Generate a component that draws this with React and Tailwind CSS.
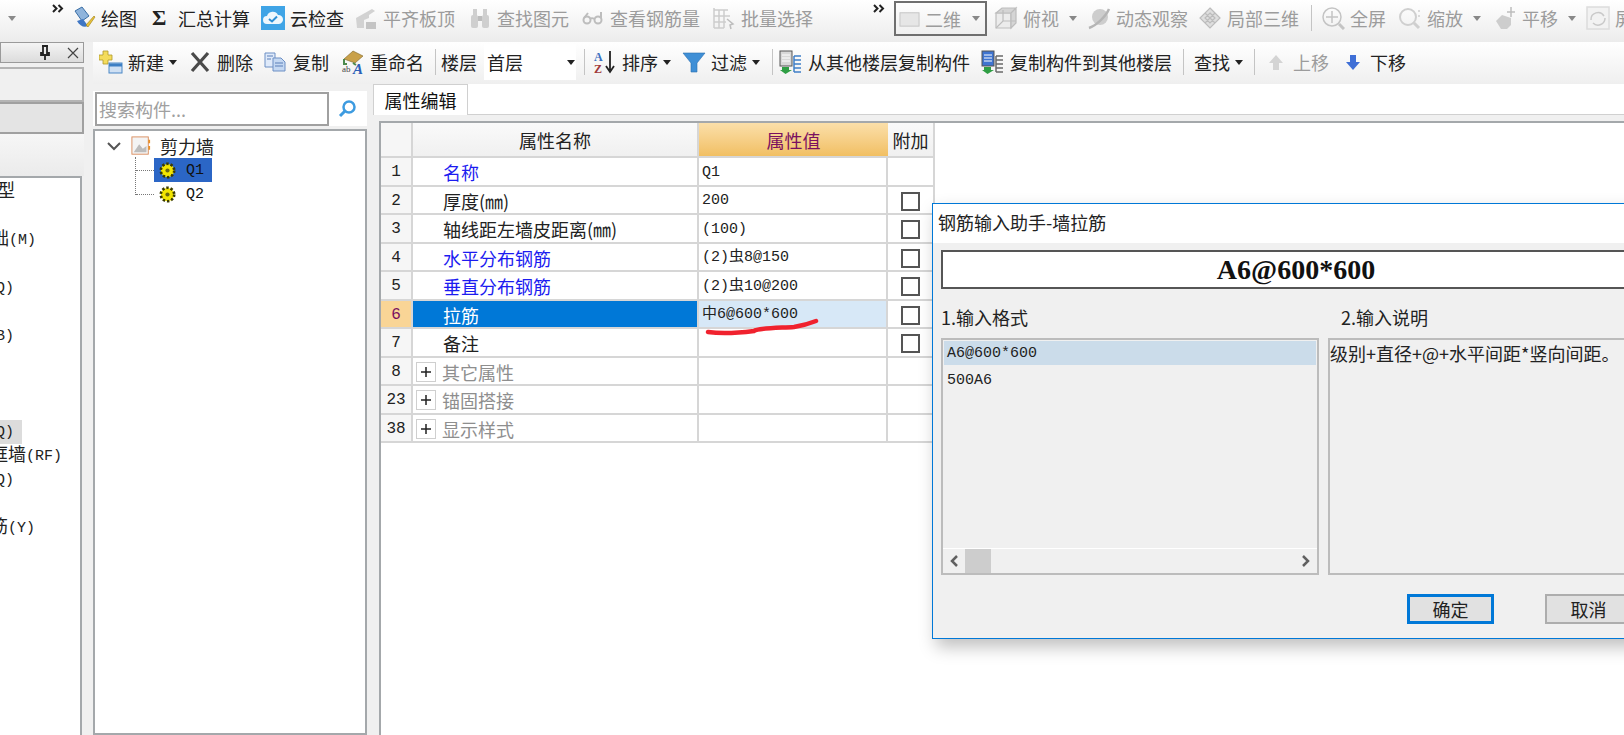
const CJK = "font-['Noto_Sans_CJK_SC','Liberation_Sans',sans-serif]";
const MONO = "font-['Liberation_Mono','Noto_Sans_CJK_SC',monospace]";

const Caret = ({ className = "" }) => (
  <svg viewBox="0 0 8 5" className={`w-2 h-[5px] shrink-0 ${className}`}>
    <path d="M0 0h8L4 5z" fill="currentColor" />
  </svg>
);

const More = ({ className = "" }) => (
  <svg viewBox="0 0 12 9" className={`w-3 h-[9px] shrink-0 ${className}`} fill="none" stroke="#222" strokeWidth="2">
    <path d="M1 1l3.500 3.500L1 8M6.500 1L10 4.500 6.500 8" />
  </svg>
);

const Sep = ({ className = "" }) => <div className={`w-px h-[26px] bg-[#c4c4c4] shrink-0 ${className}`} />;

/* top toolbar icons */
const PaintIcon = () => (
  <svg viewBox="0 0 24 24" className="w-6 h-6">
    <path d="M3 5l7-4 7 9-7 5z" fill="#8fb4dc" stroke="#3a6ea5" strokeWidth="1" />
    <path d="M5 15c3 5 7 7 11 5l-5-7z" fill="#3f76c4" />
    <path d="M14 19l8-9 1 1-7 10z" fill="#e9c33a" stroke="#9a7a12" strokeWidth=".6" />
  </svg>
);
const CloudIcon = () => (
  <svg viewBox="0 0 24 24" className="w-6 h-6">
    <rect x="0" y="0" width="24" height="24" fill="#3fa4e6" />
    <path d="M6 18a4 4 0 0 1 0-8 6 6 0 0 1 11-1 4.500 4.500 0 0 1 1 9z" fill="#eef7fd" />
    <path d="M8 13l3 2.500 5-5" fill="none" stroke="#2d8fd4" strokeWidth="2" />
  </svg>
);
const SlabIcon = () => (
  <svg viewBox="0 0 24 24" className="w-6 h-6">
    <path d="M2 12L18 3l3 2-6 4v3l-5 2v8H3z" fill="#d2d2d2" />
    <path d="M12 16h10v7H12z" fill="#c4c4c4" />
  </svg>
);
const BinocularIcon = () => (
  <svg viewBox="0 0 24 24" className="w-6 h-6" fill="#cfcfcf">
    <rect x="3" y="9" width="7" height="13" rx="2" />
    <rect x="14" y="9" width="7" height="13" rx="2" />
    <rect x="5" y="3" width="4" height="7" />
    <rect x="15" y="3" width="4" height="7" />
    <rect x="10" y="10" width="4" height="5" fill="#bdbdbd" />
  </svg>
);
const GlassesIcon = () => (
  <svg viewBox="0 0 24 24" className="w-6 h-6" fill="none" stroke="#bdbdbd" strokeWidth="2">
    <circle cx="6" cy="14" r="3.500" />
    <circle cx="17" cy="14" r="3.500" />
    <path d="M9 13c1-1 3-1 4 0M3 12l4-5M20 12V6" />
  </svg>
);
const BatchIcon = () => (
  <svg viewBox="0 0 24 24" className="w-6 h-6" fill="none" stroke="#cdcdcd" strokeWidth="1.500">
    <path d="M2 2v20M2 4h14M2 10h16M2 16h12M2 22h10M7 4v18M12 4v18" />
    <path d="M15 13l6 5-3 1 1 4" stroke="#bdbdbd" />
  </svg>
);
const PlaneIcon = () => (
  <svg viewBox="0 0 22 22" className="w-[21px] h-[21px]">
    <rect x="1" y="5" width="20" height="14" fill="#e6e6e6" stroke="#c4c4c4" />
  </svg>
);
const CubeIcon = () => (
  <svg viewBox="0 0 24 24" className="w-6 h-6" fill="#ececec" stroke="#bdbdbd" strokeWidth="1.200">
    <path d="M2 7v15h15V7z" />
    <path d="M2 7l6-5h14l-5 5zM17 7l5-5v15l-5 5z" fill="#d5d5d5" />
    <path d="M2 22l7-7h13M9 15V4" fill="none" />
  </svg>
);
const OrbitIcon = () => (
  <svg viewBox="0 0 24 24" className="w-6 h-6">
    <circle cx="13" cy="11" r="8" fill="#cdcdcd" />
    <path d="M2 22C8 20 18 12 22 3" stroke="#b5b5b5" strokeWidth="2.500" fill="none" />
  </svg>
);
const LocalIcon = () => (
  <svg viewBox="0 0 24 24" className="w-6 h-6" fill="#dedede" stroke="#bcbcbc" strokeWidth="1.200">
    <path d="M12 2l10 10-10 10L2 12z" />
    <path d="M7 7l10 10M17 7L7 17M12 7l5 5-5 5-5-5z" fill="none" />
  </svg>
);
const FullIcon = () => (
  <svg viewBox="0 0 24 24" className="w-6 h-6" fill="none" stroke="#c4c4c4" strokeWidth="1.500">
    <circle cx="11" cy="11" r="9" />
    <path d="M11 5v12M5 11h12" />
    <path d="M18 18l5 5" strokeWidth="3" />
  </svg>
);
const ZoomIcon = () => (
  <svg viewBox="0 0 24 24" className="w-6 h-6" fill="none" stroke="#cfcfcf" strokeWidth="2">
    <circle cx="10" cy="11" r="8" />
    <path d="M16 17l5 5" strokeWidth="3" />
    <path d="M21 4v2M21 9v2" strokeWidth="1.500" />
  </svg>
);
const PanIcon = () => (
  <svg viewBox="0 0 24 24" className="w-6 h-6">
    <path d="M3 15l6-6 9 3v7l-4 4H8z" fill="#cdcdcd" />
    <path d="M18 1v10M14 6h8" stroke="#bdbdbd" strokeWidth="1.500" />
  </svg>
);
const RotateIcon = () => (
  <svg viewBox="0 0 24 24" className="w-6 h-6" fill="none" stroke="#c9c9c9" strokeWidth="1.500">
    <rect x="1" y="1" width="22" height="22" fill="#f2f2f2" stroke="#dcdcdc" />
    <path d="M5 14a7 7 0 0 1 13-4M19 12a7 7 0 0 1-12 5" />
  </svg>
);

/* second toolbar icons */
const NewIcon = () => (
  <svg viewBox="0 0 24 24" className="w-6 h-6">
    <path d="M4 1h5v4h4v5H9v4H4v-4H0V5h4z" fill="#f4dc5c" stroke="#b09a2c" strokeWidth=".8" />
    <rect x="10" y="13" width="13" height="10" fill="#cfe0f3" stroke="#4b87c6" />
    <path d="M10 15h13" stroke="#3d7fc4" strokeWidth="3" />
  </svg>
);
const DeleteIcon = () => (
  <svg viewBox="0 0 24 24" className="w-6 h-6">
    <path d="M4 3l16 18M20 3L4 21" stroke="#4a4a4a" strokeWidth="3.200" />
  </svg>
);
const CopyIcon = () => (
  <svg viewBox="0 0 24 24" className="w-6 h-6" fill="#dfeafa" stroke="#6d8fc4">
    <path d="M1 3h10v14H1z" />
    <path d="M9 8h8l4 4v9H9z" fill="#c4d8f2" />
    <path d="M3 6h6M3 9h4M11 13h8M11 16h8" stroke="#5a7fb8" />
  </svg>
);
const RenameIcon = () => (
  <svg viewBox="0 0 24 24" className="w-6 h-6">
    <path d="M3 9l9-8 10 5-8 7z" fill="#c9a14a" stroke="#7d6426" strokeWidth=".6" />
    <path d="M3 9v5h3M12 13l3 2" stroke="#4d8a4d" strokeWidth="2" fill="none" />
    <text x="1" y="22" fontSize="9" fontFamily="Liberation Serif" fill="#444">ab</text>
    <text x="12" y="24" fontSize="15" fontWeight="700" fontStyle="italic" fontFamily="Liberation Serif" fill="#2c5fb8">A</text>
  </svg>
);
const SortIcon = () => (
  <svg viewBox="0 0 24 24" className="w-6 h-6">
    <text x="1" y="11" fontSize="12" fontWeight="700" fontFamily="Liberation Serif" fill="#3a6fc0">A</text>
    <text x="1" y="23" fontSize="12" fontWeight="700" fontFamily="Liberation Serif" fill="#a13a3a">Z</text>
    <path d="M17 1v19M13 16l4 6 4-6" stroke="#222" strokeWidth="1.800" fill="none" />
  </svg>
);
const FilterIcon = () => (
  <svg viewBox="0 0 24 24" className="w-6 h-6">
    <path d="M1 3h22l-8 10v9h-6v-9z" fill="#3f8fd6" stroke="#2a6fb0" strokeWidth=".6" />
  </svg>
);
const FloorCopyIcon = ({ blue }) => (
  <svg viewBox="0 0 24 24" className="w-6 h-6">
    <rect x="1" y="1" width="12" height="15" fill={blue ? "#3f74d0" : "#d8d8d8"} stroke="#555" />
    <path d="M3 5h8M3 8h8M3 11h8" stroke="#fff" />
    <path d="M3 17h7v3h3l-6.500 4L1 20h2z" fill="#2f9e44" />
    <path d="M15 6h7M15 10h7M15 14h7M15 18h7M15 22h7M15 6v16" stroke={blue ? "#6a6a6a" : "#3f7fc8"} strokeWidth="1.500" fill="none" />
  </svg>
);
const UpIcon = () => (
  <svg viewBox="0 0 24 24" className="w-6 h-6">
    <path d="M12 5l7 8h-4v7H9v-7H5z" fill="#d4d4d4" />
  </svg>
);
const DownIcon = () => (
  <svg viewBox="0 0 24 24" className="w-6 h-6">
    <path d="M12 20l7-8h-4V5H9v7H5z" fill="#3f6fd6" />
  </svg>
);

const Gear = () => (
  <svg viewBox="0 0 18 18" className="w-[17px] h-[17px] shrink-0">
    <circle cx="9" cy="9" r="7" fill="#f2e500" stroke="#3a3a00" strokeWidth="3" strokeDasharray="2.500 2" />
    <circle cx="9" cy="9" r="5.500" fill="#f2e500" />
    <circle cx="9" cy="9" r="2.200" fill="#6b6a10" />
  </svg>
);

const Tool = ({ icon, label, disabled, caret, className = "" }) => (
  <div className={`flex items-center shrink-0 whitespace-nowrap ${disabled ? "text-[#9c9c9c]" : "text-[#222]"} ${className}`}>
    <span className="w-6 h-6 mr-[5px] flex items-center justify-center">{icon}</span>
    <span>{label}</span>
    {caret && <Caret className={`ml-[5px] ${disabled ? "text-[#888] !ml-[10px]" : "text-[#222]"}`} />}
  </div>
);

const rows = [
  { n: "1", name: "名称", value: "Q1", blue: true },
  { n: "2", name: "厚度(㎜)", value: "200", check: true },
  { n: "3", name: "轴线距左墙皮距离(㎜)", value: "(100)", check: true },
  { n: "4", name: "水平分布钢筋", value: "(2)虫8@150", blue: true, check: true },
  { n: "5", name: "垂直分布钢筋", value: "(2)虫10@200", blue: true, check: true },
  { n: "6", name: "拉筋", value: "中6@600*600", check: true, selected: true },
  { n: "7", name: "备注", value: "", check: true },
  { n: "8", name: "其它属性", value: "", group: true },
  { n: "23", name: "锚固搭接", value: "", group: true },
  { n: "38", name: "显示样式", value: "", group: true },
];

// the list is cut off by the window edge, so each row gets its own left offset
const leftItems = [
  { cjk: "型", offset: "-ml-[3px]" },
  {},
  { cjk: "础", text: "(M)", offset: "-ml-[9px]" },
  {},
  { text: "Q)", offset: "-ml-[4px]" },
  {},
  { text: "B)", offset: "-ml-[4px]" },
  {},
  {},
  {},
  { text: "Q)", offset: "-ml-[4px]", active: true },
  { cjk: "框墙", text: "(RF)", offset: "-ml-[10px]" },
  { text: "Q)", offset: "-ml-[4px]" },
  {},
  { cjk: "筋", text: "(Y)", offset: "-ml-[10px]" },
];

function PropRow({ row }) {
  return (
    <div className="flex h-[28.5px]">
      <div className={`w-8 shrink-0 flex items-center justify-center pt-[2px] border-r-2 border-b-2 border-[#d6d6d6] text-[16px] ${MONO} ${row.selected ? "bg-[#f9d596] text-[#7a1060]" : "bg-[#f6f6f6] text-[#222]"}`}>
        {row.n}
      </div>
      <div className={`w-[286px] shrink-0 flex items-center pt-[2px] border-r-2 border-b-2 border-[#d6d6d6] ${row.selected ? "bg-[#0078d7] text-white" : row.blue ? "text-[#1c1cf0]" : row.group ? "text-[#8e8e8e]" : "text-[#222]"} ${row.group ? "pl-[3px]" : "pl-[30px]"}`}>
        {row.group && (
          <span className="w-[20px] h-[20px] mr-[6px] border border-[#cfcfcf] bg-white flex items-center justify-center">
            <svg viewBox="0 0 12 12" className="w-3 h-3"><path d="M6 1v10M1 6h10" stroke="#222" strokeWidth="1.500" /></svg>
          </span>
        )}
        {row.name}
      </div>
      <div className={`relative w-[189px] shrink-0 flex items-center pl-[3px] pt-[2px] border-r-2 border-b-2 border-[#d6d6d6] text-[15px] text-[#222] ${MONO} ${row.selected ? "bg-[#d7e8f7]" : ""}`}>
        {row.value}
        {row.selected && (
          <svg viewBox="0 0 116 16" className="absolute left-[6px] top-[18px] w-[116px] h-4 overflow-visible">
            <path d="M3 13c14 2 30 1 46-1 4-3 24-3 40-4 6-1 12-2 22-6" fill="none" stroke="#f0222e" strokeWidth="4.500" strokeLinecap="round" />
          </svg>
        )}
      </div>
      <div className="w-[47px] shrink-0 flex items-center justify-center pt-[3px] border-r-2 border-b-2 border-[#d6d6d6]">
        {row.check && <span className="w-[19px] h-[19px] border-2 border-[#555] bg-white" />}
      </div>
    </div>
  );
}

function Dialog() {
  return (
    <div className={`absolute left-[932px] top-[203px] w-[740px] h-[436px] flex flex-col bg-[#f0f0f0] border border-[#0078d7] shadow-[4px_8px_16px_rgba(0,0,0,0.25)] ${CJK}`}>
      <div className="h-[39px] shrink-0 bg-white pl-[5px] pb-1 flex items-center text-[#222]">钢筋输入助手-墙拉筋</div>
      <div className="mt-[7px] ml-2 w-[710px] h-[39px] shrink-0 border-2 border-[#555] bg-white flex items-center justify-center font-['Liberation_Serif',serif] font-bold text-[28px] text-[#111]">
        A6@600*600
      </div>
      <div className="mt-[15px] flex h-[26px] shrink-0 items-center text-[#222]">
        <span className="ml-2 w-[400px]">1.输入格式</span>
        <span>2.输入说明</span>
      </div>
      <div className="mt-2 ml-2 flex gap-[9px] shrink-0">
        <div className="w-[378px] h-[237px] shrink-0 flex flex-col border-2 border-[#bcbcbc]">
          <div className={`flex-1 pt-[1px] px-[1px] text-[15px] text-[#222] ${MONO}`}>
            <div className="h-[24px] pl-[3px] flex items-center bg-[#cbdcea]">A6@600*600</div>
            <div className="h-[26px] mt-[2px] pl-[3px] flex items-center">500A6</div>
          </div>
          <div className="h-[25px] shrink-0 flex items-center px-[6px] border-t border-white">
            <svg viewBox="0 0 10 14" className="w-[10px] h-[14px]"><path d="M8 2L3 7l5 5" fill="none" stroke="#606060" strokeWidth="2.500" /></svg>
            <div className="ml-[6px] w-[26px] h-[24px] bg-[#cdcdcd]" />
            <div className="flex-1" />
            <svg viewBox="0 0 10 14" className="w-[10px] h-[14px]"><path d="M2 2l5 5-5 5" fill="none" stroke="#606060" strokeWidth="2.500" /></svg>
          </div>
        </div>
        <div className="w-[400px] h-[237px] shrink-0 border-2 border-[#bcbcbc] pt-1 text-[#222] whitespace-nowrap">
          级别+直径+@+水平间距*竖向间距。
        </div>
      </div>
      <div className="mt-[19px] flex shrink-0">
        <button className="ml-[474px] w-[87px] h-[30px] shrink-0 border-[3px] border-[#0078d7] bg-[#e1e1e1] flex items-center justify-center text-[#222]">确定</button>
        <button className="ml-[51px] w-[87px] h-[30px] shrink-0 border-2 border-[#adadad] bg-[#e1e1e1] flex items-center justify-center text-[#222]">取消</button>
      </div>
    </div>
  );
}

export default function App() {
  return (
    <div className={`relative w-[1624px] h-[735px] overflow-hidden bg-[#f0f0f0] text-[18px] leading-none ${CJK}`}>
      {/* main toolbar */}
      <div className="h-[42px] pb-[6px] flex items-center overflow-hidden bg-gradient-to-b from-white to-[#ececec]">
        <Caret className="ml-2 text-[#8a8a8a]" />
        <More className="ml-9 -mt-5 shrink-0" />
        <Tool className="ml-2" icon={<PaintIcon />} label="绘图" />
        <div className="ml-[15px] flex items-center shrink-0 text-[#222]">
          <span className="font-['Liberation_Serif',serif] font-bold text-[22px] w-[26px]">Σ</span>
          <span>汇总计算</span>
        </div>
        <Tool className="ml-[11px]" icon={<CloudIcon />} label="云检查" />
        <Tool className="ml-[10px]" icon={<SlabIcon />} label="平齐板顶" disabled />
        <Tool className="ml-[13px]" icon={<BinocularIcon />} label="查找图元" disabled />
        <Tool className="ml-3" icon={<GlassesIcon />} label="查看钢筋量" disabled />
        <Tool className="ml-3" icon={<BatchIcon />} label="批量选择" disabled />
        <More className="ml-[60px] -mt-5" />
        <div className="ml-[9px] w-[93px] h-[35px] mt-[1px] shrink-0 border-2 border-[#6f6f6f] flex items-center pl-[3px] text-[#9c9c9c]">
          <PlaneIcon />
          <span className="ml-[5px]">二维</span>
          <Caret className="ml-[11px] text-[#888]" />
        </div>
        <Tool className="ml-[7px]" icon={<CubeIcon />} label="俯视" disabled caret />
        <Tool className="ml-[10px]" icon={<OrbitIcon />} label="动态观察" disabled />
        <Tool className="ml-[10px]" icon={<LocalIcon />} label="局部三维" disabled />
        <Sep className="ml-3" />
        <Tool className="ml-[9px]" icon={<FullIcon />} label="全屏" disabled />
        <Tool className="ml-3" icon={<ZoomIcon />} label="缩放" disabled caret />
        <Tool className="ml-3" icon={<PanIcon />} label="平移" disabled caret />
        <Tool className="ml-[10px]" icon={<RotateIcon />} label="屏幕旋转" disabled />
      </div>

      <div className="flex h-[693px]">
        {/* left navigation panel, cut off by the window edge */}
        <div className="w-[84px] shrink-0 flex flex-col">
          <div className="h-[21px] shrink-0 flex items-center border border-[#9a9a9a] bg-gradient-to-b from-[#f4f4f4] to-[#dcdcdc]">
            <svg viewBox="0 0 12 16" className="ml-[38px] w-3 h-4"><path d="M3 1h6M4 1v7H2v2h8V8H8V1M6 10v5" fill="none" stroke="#222" strokeWidth="1.800" /></svg>
            <svg viewBox="0 0 12 12" className="ml-[16px] w-3 h-3"><path d="M1 1l10 10M11 1L1 11" stroke="#444" strokeWidth="1.200" /></svg>
          </div>
          <div className="mt-1 h-[35px] shrink-0 border-2 border-l-0 border-[#b4b4b4] bg-[#f0f0f0]" />
          <div className="h-[32px] shrink-0 border-2 border-l-0 border-[#a0a0a0] bg-[#e4e4e4]" />
          <div className="h-[42px] shrink-0 bg-gradient-to-b from-[#f6f6f6] to-[#ebebeb]" />
          <div className={`flex-1 w-[82px] pt-[2px] border-r-2 border-t-2 border-[#a4a8ab] bg-white text-[15px] text-[#222] overflow-hidden ${MONO}`}>
            {leftItems.map((item, i) => (
              <div key={i} className="h-6 flex items-center overflow-hidden">
                {(item.cjk || item.text) && (
                  <span className={`h-6 flex items-center whitespace-nowrap ${item.offset} ${item.active ? "w-[26px] bg-[#dcdcdc]" : ""}`}>
                    {item.cjk && <span className="text-[18px]">{item.cjk}</span>}
                    {item.text}
                  </span>
                )}
              </div>
            ))}
          </div>
        </div>

        <div className="flex-1 min-w-0 flex flex-col pl-[9px]">
          {/* component toolbar */}
          <div className="h-[42px] pb-[2px] shrink-0 flex items-center overflow-hidden bg-gradient-to-b from-white to-[#efefef]">
            <Tool className="ml-[6px]" icon={<NewIcon />} label="新建" caret />
            <Tool className="ml-[11px]" icon={<DeleteIcon />} label="删除" />
            <Tool className="ml-[11px]" icon={<CopyIcon />} label="复制" />
            <Tool className="ml-3" icon={<RenameIcon />} label="重命名" />
            <Sep className="ml-[11px]" />
            <span className="ml-[5px] shrink-0 text-[#222]">楼层</span>
            <div className="ml-[7px] w-[92px] h-[36px] shrink-0 bg-white flex items-center pl-[3px] text-[#222]">
              首层
              <Caret className="ml-[44px]" />
            </div>
            <Sep className="ml-2" />
            <Tool className="ml-2" icon={<SortIcon />} label="排序" caret />
            <Tool className="ml-[11px]" icon={<FilterIcon />} label="过滤" caret />
            <Sep className="ml-3" />
            <Tool className="ml-[6px]" icon={<FloorCopyIcon />} label="从其他楼层复制构件" />
            <Tool className="ml-[11px]" icon={<FloorCopyIcon blue />} label="复制构件到其他楼层" />
            <Sep className="ml-[11px]" />
            <div className="ml-[10px] flex items-center shrink-0 text-[#222]">
              查找
              <Caret className="ml-[5px]" />
            </div>
            <Sep className="ml-[11px]" />
            <Tool className="ml-[9px]" icon={<UpIcon />} label="上移" disabled />
            <Tool className="ml-3" icon={<DownIcon />} label="下移" />
          </div>

          <div className="flex-1 min-h-0 flex">
            {/* component tree */}
            <div className="w-[274px] shrink-0 flex flex-col">
              <div className="mt-[7px] h-[35px] shrink-0 flex items-center bg-white">
                <div className="ml-[2px] w-[234px] h-[34px] border-2 border-[#a0a0a0] flex items-center pl-[2px] text-[#a0a0a0]">搜索构件...</div>
                <svg viewBox="0 0 20 20" className="ml-2 w-5 h-5" fill="none">
                  <circle cx="12" cy="8" r="5.500" stroke="#3d9be0" strokeWidth="2.500" />
                  <path d="M8 12l-5 5" stroke="#3d9be0" strokeWidth="3" />
                </svg>
              </div>
              <div className="mt-[3px] flex-1 border-2 border-[#a4a8ab] bg-white pl-[12px] pt-[4px]">
                <div className="flex items-center h-[22px]">
                  <svg viewBox="0 0 14 10" className="w-[14px] h-[10px]"><path d="M1 2l6 6 6-6" fill="none" stroke="#555" strokeWidth="2" /></svg>
                  <svg viewBox="0 0 22 22" className="ml-[9px] w-[22px] h-[20px]">
                    <rect x="1" y="1" width="18" height="19" fill="#f4f4f4" stroke="#d88a5a" />
                    <path d="M3 18l6-9 4 5 4-3v7z" fill="#bcbcbc" />
                    <path d="M20 4v4M20 11v4" stroke="#e8902a" strokeWidth="2" />
                  </svg>
                  <span className="ml-[8px] text-[#222]">剪力墙</span>
                </div>
                <div className="ml-[28px] w-[32px] border-l border-dotted border-[#777] h-[38px]" />
                <div className="-mt-[37px] ml-[29px] flex items-center">
                  <div className="w-[18px] border-t border-dotted border-[#777]" />
                  <div className={`w-[58px] h-[24px] bg-[#2b66c6] flex items-center pl-[5px] text-[15px] text-[#111] ${MONO}`}>
                    <Gear />
                    <span className="ml-[10px]">Q1</span>
                  </div>
                </div>
                <div className="ml-[29px] h-[24px] flex items-center">
                  <div className="w-[18px] border-t border-dotted border-[#777]" />
                  <div className={`pl-[5px] flex items-center text-[15px] text-[#111] ${MONO}`}>
                    <Gear />
                    <span className="ml-[10px]">Q2</span>
                  </div>
                </div>
              </div>
            </div>

            {/* property grid */}
            <div className="ml-[6px] flex-1 min-w-0 flex flex-col">
              <div className="h-[31px] shrink-0 flex items-end border-b border-[#d0d0d0] bg-white">
                <div className="w-[95px] h-[31px] -mb-px border border-b-0 border-[#d0d0d0] bg-white flex items-center justify-center text-[#111]">属性编辑</div>
              </div>
              <div className="flex-1 pt-[6px] pl-[6px] bg-[#f0f0f0]">
                <div className="h-full border-l-2 border-t-2 border-[#a4a8ab] bg-white">
                  <div className="flex h-[35px]">
                    <div className="w-8 shrink-0 border-r-2 border-b-2 border-[#d6d6d6] bg-[#f6f6f6]" />
                    <div className="w-[286px] shrink-0 flex items-center justify-center border-r-2 border-b-2 border-[#d6d6d6] bg-gradient-to-b from-[#fafafa] to-[#f0f0f0] text-[#222]">属性名称</div>
                    <div className="w-[189px] shrink-0 flex items-center justify-center border-b-2 border-[#d6d6d6] bg-gradient-to-b from-[#fbdfa9] to-[#f1bf62] text-[#7a1060]">属性值</div>
                    <div className="w-[47px] shrink-0 flex items-center justify-center border-r-2 border-b-2 border-[#d6d6d6] bg-gradient-to-b from-[#fafafa] to-[#f0f0f0] text-[#222]">附加</div>
                  </div>
                  {rows.map((row) => (
                    <PropRow key={row.n} row={row} />
                  ))}
                </div>
              </div>
            </div>
          </div>
        </div>
      </div>

      <Dialog />
    </div>
  );
}
